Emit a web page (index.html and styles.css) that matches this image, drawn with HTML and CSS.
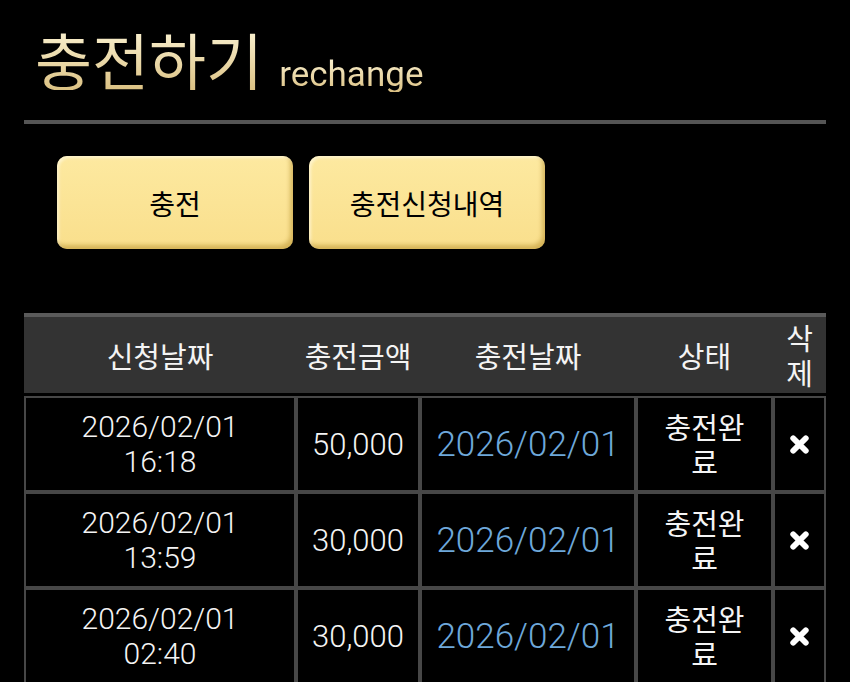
FILE: index.html
```html
<!DOCTYPE html>
<html lang="ko">

<head>
	<meta charset="utf-8">
	<title>충전하기</title>
	<link rel="stylesheet" href="styles.css">
</head>

<body>
	<div class="page">
		<div class="title-bar">
			<h1 class="title"><span class="title-main">충전하기</span><span class="title-sub">rechange</span></h1>
		</div>

		<div class="tabs">
			<button class="tab-btn">충전</button>
			<button class="tab-btn">충전신청내역</button>
		</div>

		<table class="charge-table">
			<colgroup>
				<col class="col-req">
				<col class="col-amount">
				<col class="col-date">
				<col class="col-state">
				<col class="col-del">
			</colgroup>
			<thead>
				<tr>
					<th>신청날짜</th>
					<th>충전금액</th>
					<th>충전날짜</th>
					<th>상태</th>
					<th>삭제</th>
				</tr>
			</thead>
			<tbody>
				<tr>
					<td class="cell-req">2026/02/01 16:18</td>
					<td class="cell-num">50,000</td>
					<td class="cell-date">2026/02/01</td>
					<td class="cell-state">충전완료</td>
					<td class="cell-del">
						<svg class="del-icon" viewBox="0 0 20 20"><path d="M4 4 L16 16 M16 4 L4 16" /></svg>
					</td>
				</tr>
				<tr>
					<td class="cell-req">2026/02/01 13:59</td>
					<td class="cell-num">30,000</td>
					<td class="cell-date">2026/02/01</td>
					<td class="cell-state">충전완료</td>
					<td class="cell-del">
						<svg class="del-icon" viewBox="0 0 20 20"><path d="M4 4 L16 16 M16 4 L4 16" /></svg>
					</td>
				</tr>
				<tr>
					<td class="cell-req">2026/02/01 02:40</td>
					<td class="cell-num">30,000</td>
					<td class="cell-date">2026/02/01</td>
					<td class="cell-state">충전완료</td>
					<td class="cell-del">
						<svg class="del-icon" viewBox="0 0 20 20"><path d="M4 4 L16 16 M16 4 L4 16" /></svg>
					</td>
				</tr>
			</tbody>
		</table>
	</div>
</body>

</html>
```

FILE: styles.css
```css
body {
	margin: 0;
	background-color: #000;
	color: #f4f4f4;
	font-family: Roboto, "Noto Sans CJK KR", sans-serif;
}

.page {
	padding: 0 24px;
}

/* 상단 제목 */
.title-bar {
	padding: 28px 0 28px 11px;
	border-bottom: 4px solid #555;
}

.title {
	display: flex;
	align-items: baseline;
	gap: 16px;
	margin: 0;
	font-weight: 400;
	line-height: 1;
}

.title-main,
.title-sub {
	color: #f1e1ad;
	background: linear-gradient(#fbf2d2, #dcc284);
	-webkit-background-clip: text;
	background-clip: text;
	-webkit-text-fill-color: transparent;
}

.title-main {
	font-family: "Noto Sans CJK KR", sans-serif;
	font-size: 62px;
}

.title-sub {
	font-family: Roboto, sans-serif;
	font-size: 35px;
}

/* 버튼 */
.tabs {
	display: flex;
	gap: 16px;
	margin-top: 32px;
	padding-left: 33px;
}

.tab-btn {
	width: 236px;
	height: 93px;
	border: none;
	border-radius: 10px;
	background: linear-gradient(#fde9a0, #f9df8c);
	box-shadow: inset -3px -4px 4px rgba(160, 115, 10, 0.4), inset 2px 2px 3px rgba(255, 250, 225, 0.7);
	font-family: "Noto Sans CJK KR", sans-serif;
	font-size: 28px;
	font-weight: 400;
	color: #000;
	padding: 0;
}

/* 테이블 */
.charge-table {
	margin-top: 64px;
	width: 802px;
	table-layout: fixed;
	border-collapse: separate;
	border-spacing: 0;
	text-align: center;
}

.col-req {
	width: 272px;
}

.col-amount {
	width: 124px;
}

.col-date {
	width: 216px;
}

.col-state {
	width: 137px;
}

.col-del {
	width: 53px;
}

.charge-table th {
	background-color: #333;
	border-top: 4px solid #5a5a5a;
	border-bottom: 3px solid #000;
	padding: 3px 4px;
	height: 70px;
	font-size: 29px;
	font-weight: 400;
	line-height: 35px;
	color: #f4f4f4;
	font-family: "Noto Sans CJK KR", sans-serif;
}

.charge-table td {
	border: 2px solid #474747;
	padding: 11px 4px;
	height: 70px;
	font-size: 31px;
	font-weight: 300;
	line-height: 35px;
}

.charge-table td.cell-req {
	padding: 11px 24px;
	font-size: 30px;
}

.charge-table td.cell-date {
	font-size: 35px;
	color: #6ea8da;
}

.charge-table td.cell-state {
	padding: 11px 20px;
	font-size: 29px;
	font-weight: 400;
	font-family: "Noto Sans CJK KR", sans-serif;
}

.del-icon {
	display: block;
	width: 21px;
	height: 21px;
	margin: 0 auto;
	fill: none;
	stroke: #fff;
	stroke-width: 5.5;
	stroke-linecap: round;
}
```
